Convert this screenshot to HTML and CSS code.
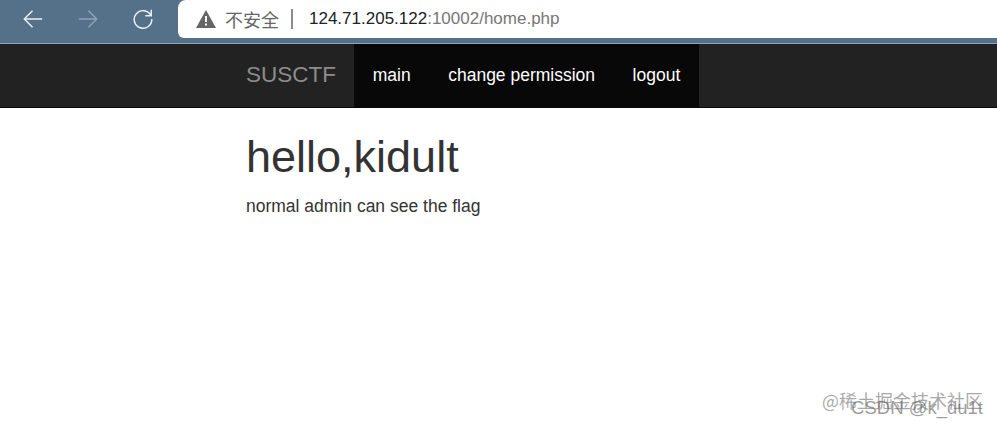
FILE: index.html
```html
<!DOCTYPE html>
<html lang="zh">
    <head>
        <title>SUSCTF</title>
        <meta charset="UTF-8">
        <link rel="stylesheet" href="styles.css">
    </head>
    <body>
        <header class="chrome">
            <div class="chrome-btns">
                <svg class="chrome-icon" viewBox="0 0 24 24"><path d="M22 12H2.5M11.5 3l-9 9 9 9"/></svg>
                <svg class="chrome-icon dim" viewBox="0 0 24 24"><path d="M2 12h19.500M12.500 3l9 9-9 9"/></svg>
                <svg class="chrome-icon" viewBox="0 0 24 24"><path d="M20.500 8A9.600 9.600 0 1 0 21.600 12M21 2v6.500h-6.500"/></svg>
            </div>
            <div class="urlbar">
                <svg class="warn" viewBox="0 0 20 18"><path d="M10 0 20 18H0Z"/><rect class="warn-mark" x="9" y="6" width="2" height="6"/><rect class="warn-mark" x="9" y="13.500" width="2" height="2"/></svg>
                <span class="insecure">不安全</span>
                <span class="sep"></span>
                <span class="url">124.71.205.122<span class="url-rest">:10002/home.php</span></span>
            </div>
        </header>

        <nav class="navbar">
            <div class="container nav-inner">
                <a class="brand">SUSCTF</a>
                <ul class="nav-links">
                    <li>main</li>
                    <li>change permission</li>
                    <li>logout</li>
                </ul>
            </div>
        </nav>

        <main class="container">
            <h1>hello,kidult</h1>
            <p>normal admin can see the flag</p>
        </main>

        <div class="mark mark-juejin">@稀土掘金技术社区</div>
        <div class="mark mark-csdn">CSDN @k_du1t</div>
    </body>
</html>
```

FILE: styles.css
```css
html, body {
    height: 100%;
    overflow: hidden;
}

body {
    margin: 0;
    font-family: "Liberation Sans", Arial, sans-serif;
    color: #333;
    background-color: #fff;
}

.chrome {
    display: flex;
    height: 43px;
    background-color: #557089;
    border-bottom: 1px solid #8fa3bb;
}

.chrome-btns {
    display: flex;
    align-items: center;
    gap: 33px;
    width: 178px;
    height: 37px;
    padding-left: 22px;
    box-sizing: border-box;
}

.chrome-icon {
    width: 22px;
    height: 22px;
    fill: none;
    stroke: #eaf1f8;
    stroke-width: 1.6;
}

.chrome-icon.dim {
    stroke: #8ea3b8;
}

.urlbar {
    flex: 1;
    display: flex;
    align-items: center;
    height: 38px;
    padding-left: 18px;
    background-color: #fff;
    border-radius: 8px 0 0 6px;
}

.warn {
    width: 20px;
    height: 18px;
    fill: #666;
}

.warn-mark {
    fill: #fff;
}

.insecure {
    margin-left: 9px;
    font-family: "Noto Sans CJK SC", sans-serif;
    font-size: 18px;
    color: #666;
}

.sep {
    width: 2px;
    height: 20px;
    margin: 0 16px 0 12px;
    background-color: #8c8c8c;
}

.url {
    font-size: 17px;
    color: #202124;
}

.url-rest {
    color: #777;
}

.navbar {
    height: 63px;
    background-color: #222;
    border-bottom: 1px solid #080808;
}

.container {
    width: 751px;
    margin-left: 246px;
}

.nav-inner {
    display: flex;
    align-items: stretch;
    height: 100%;
}

.brand {
    width: 108px;
    line-height: 62px;
    font-size: 22.5px;
    color: #8c8c8c;
}

.nav-links {
    display: flex;
    margin: 0;
    padding: 0;
    list-style: none;
    background-color: #080808;
}

.nav-links li {
    padding: 0 18.75px;
    line-height: 62px;
    font-size: 17.5px;
    color: #fff;
}

h1 {
    margin: 23px 0 0;
    font-size: 45px;
    font-weight: 400;
    line-height: 52px;
}

p {
    margin: 11px 0 0;
    font-size: 17.5px;
    line-height: 24px;
}

.mark {
    position: absolute;
    white-space: nowrap;
}

.mark-juejin {
    right: 14px;
    top: 389px;
    font-family: "Noto Sans CJK SC", sans-serif;
    font-size: 18px;
    line-height: 22px;
    color: rgba(110, 110, 110, 0.6);
}

.mark-csdn {
    right: 14px;
    top: 397px;
    font-size: 18.5px;
    line-height: 22px;
    color: rgba(90, 90, 90, 0.6);
}
```
